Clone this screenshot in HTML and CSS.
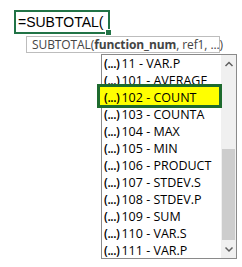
FILE: index.html
```html
<!DOCTYPE html>
<html>
<head>
<meta charset="utf-8">
<link rel="stylesheet" href="styles.css">
</head>
<body>
<div class="page">
  <div class="cell"><span class="formula">=SUBTOTAL(</span><span class="handle"></span></div>
  <div class="tip">SUBTOTAL(<b>function_num</b>, ref1, ...)</div>
  <div class="drop">
    <ul class="list">
      <li class="item"><span class="ic">(...)</span>11 - VAR.P</li>
      <li class="item"><span class="ic">(...)</span>101 - AVERAGE</li>
      <li class="item sel"><span class="ic">(...)</span>102 - COUNT</li>
      <li class="item"><span class="ic">(...)</span>103 - COUNTA</li>
      <li class="item"><span class="ic">(...)</span>104 - MAX</li>
      <li class="item"><span class="ic">(...)</span>105 - MIN</li>
      <li class="item"><span class="ic">(...)</span>106 - PRODUCT</li>
      <li class="item"><span class="ic">(...)</span>107 - STDEV.S</li>
      <li class="item"><span class="ic">(...)</span>108 - STDEV.P</li>
      <li class="item"><span class="ic">(...)</span>109 - SUM</li>
      <li class="item"><span class="ic">(...)</span>110 - VAR.S</li>
      <li class="item"><span class="ic">(...)</span>111 - VAR.P</li>
    </ul>
    <div class="sbar">
      <svg class="arr" width="14" height="14" viewBox="0 0 14 14"><path d="M3.5 9 L7 5.5 L10.5 9" fill="none" stroke="#606060" stroke-width="1.5"/></svg>
      <div class="track"><div class="thumb"></div></div>
      <svg class="arr" width="14" height="14" viewBox="0 0 14 14"><path d="M3.5 5.5 L7 9 L10.5 5.5" fill="none" stroke="#606060" stroke-width="1.5"/></svg>
    </div>
  </div>
</div>
</body>
</html>
```
FILE: styles.css
```css
html, body { margin: 0; padding: 0; background: #fff; }
.page { width: 242px; height: 267px; overflow: hidden; display: flex; flex-direction: column; align-items: flex-start; padding-top: 10px; box-sizing: border-box; }
.cell { position: relative; margin-left: 14px; width: 96px; height: 24px; box-sizing: border-box; border: 2px solid #217346; display: flex; align-items: center; padding-left: 2px; }
.formula { font-family: "Liberation Sans", Arial, sans-serif; font-size: 14px; color: #000; line-height: 1; }
.handle { position: absolute; right: -4px; bottom: -4px; width: 5px; height: 5px; background: #217346; border: 1px solid #fff; }
.tip { margin-left: 26px; margin-top: 2px; width: 194px; height: 17px; box-sizing: border-box; border: 1px solid #bdbdbd; background: #fff; font-family: "Open Sans", sans-serif; font-size: 12px; color: #444; line-height: 15px; padding-left: 5px; white-space: nowrap; letter-spacing: -0.1px; }
.tip b { font-weight: 700; }
.drop { margin-left: 101px; margin-top: 1px; width: 136px; height: 205px; box-sizing: border-box; border: 1px solid #8a8a8a; background: #fff; display: flex; }
.list { list-style: none; margin: 0; padding: 0; flex: 1; }
.item { position: relative; height: 17px; display: flex; align-items: center; font-family: "Open Sans", sans-serif; font-size: 12.5px; color: #000; white-space: nowrap; padding-left: 2px; }
.ic { font-weight: 600; letter-spacing: -0.4px; margin-right: 2px; font-size: 12px; }
.sel { background: #ffff00; z-index: 1; }
.sel::before { content: ""; position: absolute; left: -5px; right: -1px; top: -5px; bottom: -2px; border: 3px solid #1e6b2e; pointer-events: none; }
.sel::after { content: ""; position: absolute; left: -2px; right: 2px; top: -2px; bottom: 1px; background: #ffff00; z-index: -1; }
.sbar { width: 15px; background: #f0f0f0; display: flex; flex-direction: column; align-items: center; padding-top: 2px; padding-bottom: 2px; }
.arr { flex: none; }
.track { flex: 1; width: 100%; display: flex; flex-direction: column; justify-content: flex-end; padding: 4px 0 2px; box-sizing: border-box; }
.thumb { height: 91px; background: #cdcdcd; margin: 0 1px; }
```
